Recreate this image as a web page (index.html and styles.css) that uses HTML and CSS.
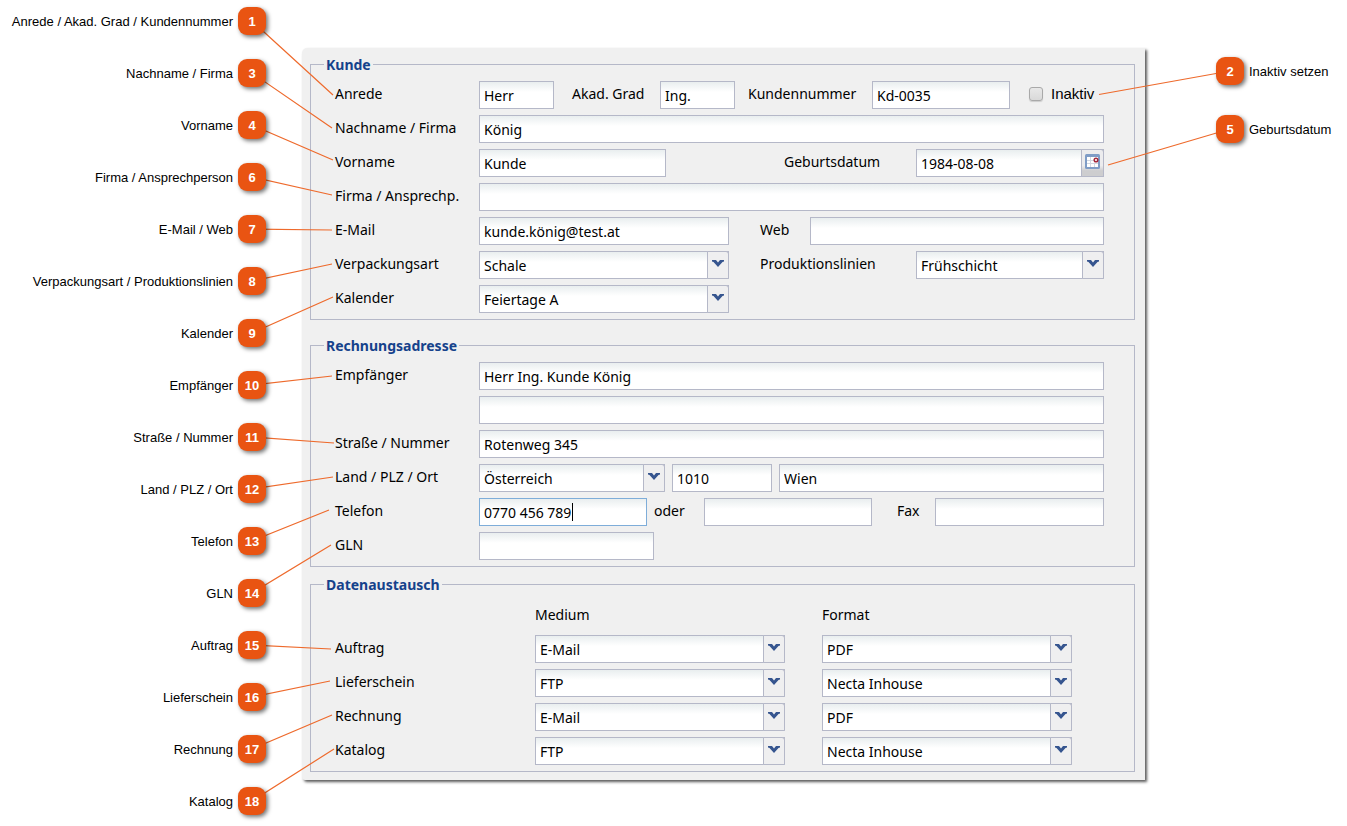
FILE: index.html
```html
<!DOCTYPE html>
<html lang="de">
<head>
<meta charset="utf-8">
<title>Kunde</title>
<link rel="stylesheet" href="styles.css">
</head>
<body>
<svg class="sprite" aria-hidden="true">
  <symbol id="chevron" viewBox="0 0 20 26">
    <path d="M4 8h4l2 2.500L12 8h4v1.500l-1.500.5-4.500 5-4.500-5L4 9.500z" fill="#36558f"/>
  </symbol>
  <symbol id="calendar" viewBox="0 0 21 26">
    <rect x="3" y="4" width="15" height="15" rx="1.500" fill="#7f9cc6"/>
    <rect x="5" y="7" width="11" height="10" fill="#fff"/>
    <path d="M8.500 7v10M12.500 13v4M5 10.500h7M5 13.500h11" stroke="#d3d8e2" fill="none"/>
    <circle cx="14" cy="10" r="1.800" fill="#fff" stroke="#a3283c" stroke-width="1.500"/>
  </symbol>
</svg>

<main class="page">
  <ol class="callouts callouts-left">
    <li><span>Anrede / Akad. Grad / Kundennummer</span><b class="badge">1</b></li>
    <li><span>Nachname / Firma</span><b class="badge">3</b></li>
    <li><span>Vorname</span><b class="badge">4</b></li>
    <li><span>Firma / Ansprechperson</span><b class="badge">6</b></li>
    <li><span>E-Mail / Web</span><b class="badge">7</b></li>
    <li><span>Verpackungsart / Produktionslinien</span><b class="badge">8</b></li>
    <li><span>Kalender</span><b class="badge">9</b></li>
    <li><span>Empfänger</span><b class="badge">10</b></li>
    <li><span>Straße / Nummer</span><b class="badge">11</b></li>
    <li><span>Land / PLZ / Ort</span><b class="badge">12</b></li>
    <li><span>Telefon</span><b class="badge">13</b></li>
    <li><span>GLN</span><b class="badge">14</b></li>
    <li><span>Auftrag</span><b class="badge">15</b></li>
    <li><span>Lieferschein</span><b class="badge">16</b></li>
    <li><span>Rechnung</span><b class="badge">17</b></li>
    <li><span>Katalog</span><b class="badge">18</b></li>
  </ol>

  <form class="panel">
    <fieldset>
      <legend>Kunde</legend>
      <div class="row row-person">
        <label for="anrede">Anrede</label>
        <input class="field" id="anrede" type="text" value="Herr">
        <label class="indent-m" for="grad">Akad. Grad</label>
        <input class="field" id="grad" type="text" value="Ing.">
        <label class="indent-s" for="nummer">Kundennummer</label>
        <input class="field" id="nummer" type="text" value="Kd-0035">
        <label class="check"><input type="checkbox">Inaktiv</label>
      </div>
      <div class="row row-full">
        <label for="nachname">Nachname / Firma</label>
        <input class="field" id="nachname" type="text" value="König">
      </div>
      <div class="row row-birth">
        <label for="vorname">Vorname</label>
        <input class="field" id="vorname" type="text" value="Kunde">
        <label class="third" for="geburt">Geburtsdatum</label>
        <div class="date">
          <input class="field" id="geburt" type="text" value="1984-08-08">
          <button class="picker" type="button" aria-label="Kalender öffnen"><svg><use href="#calendar"/></svg></button>
        </div>
      </div>
      <div class="row row-full">
        <label for="firma">Firma / Ansprechp.</label>
        <input class="field" id="firma" type="text">
      </div>
      <div class="row row-web">
        <label for="email">E-Mail</label>
        <input class="field" id="email" type="text" value="kunde.könig@test.at">
        <label class="indent-l" for="web">Web</label>
        <input class="field" id="web" type="text">
      </div>
      <div class="row row-pack">
        <label for="pack">Verpackungsart</label>
        <div class="combo"><select class="field" id="pack"><option>Schale</option></select><svg><use href="#chevron"/></svg></div>
        <label class="indent-l" for="linien">Produktionslinien</label>
        <div class="combo"><select class="field" id="linien"><option>Frühschicht</option></select><svg><use href="#chevron"/></svg></div>
      </div>
      <div class="row row-pack">
        <label for="kalender">Kalender</label>
        <div class="combo"><select class="field" id="kalender"><option>Feiertage A</option></select><svg><use href="#chevron"/></svg></div>
      </div>
    </fieldset>

    <fieldset class="spaced">
      <legend>Rechnungsadresse</legend>
      <div class="row row-full">
        <label for="empf">Empfänger</label>
        <input class="field" id="empf" type="text" value="Herr Ing. Kunde König">
      </div>
      <div class="row row-full">
        <span></span>
        <input class="field" type="text" aria-label="Empfänger Zusatz">
      </div>
      <div class="row row-full">
        <label for="strasse">Straße / Nummer</label>
        <input class="field" id="strasse" type="text" value="Rotenweg 345">
      </div>
      <div class="row row-city">
        <label for="land">Land / PLZ / Ort</label>
        <div class="combo"><select class="field" id="land"><option>Österreich</option></select><svg><use href="#chevron"/></svg></div>
        <input class="field" type="text" aria-label="PLZ" value="1010">
        <input class="field" type="text" aria-label="Ort" value="Wien">
      </div>
      <div class="row row-phone">
        <label for="tel">Telefon</label>
        <input class="field active" id="tel" type="text" value="0770 456 789">
        <label class="indent-xs" for="tel2">oder</label>
        <input class="field" id="tel2" type="text">
        <label class="indent-f" for="fax">Fax</label>
        <input class="field" id="fax" type="text">
      </div>
      <div class="row row-gln">
        <label for="gln">GLN</label>
        <input class="field" id="gln" type="text">
      </div>
    </fieldset>

    <fieldset class="close">
      <legend>Datenaustausch</legend>
      <div class="row row-data">
        <span></span><span>Medium</span><span></span><span>Format</span>
      </div>
      <div class="row row-data">
        <label for="m1">Auftrag</label>
        <div class="combo"><select class="field" id="m1"><option>E-Mail</option></select><svg><use href="#chevron"/></svg></div>
        <span></span>
        <div class="combo"><select class="field" aria-label="Auftrag Format"><option>PDF</option></select><svg><use href="#chevron"/></svg></div>
      </div>
      <div class="row row-data">
        <label for="m2">Lieferschein</label>
        <div class="combo"><select class="field" id="m2"><option>FTP</option></select><svg><use href="#chevron"/></svg></div>
        <span></span>
        <div class="combo"><select class="field" aria-label="Lieferschein Format"><option>Necta Inhouse</option></select><svg><use href="#chevron"/></svg></div>
      </div>
      <div class="row row-data">
        <label for="m3">Rechnung</label>
        <div class="combo"><select class="field" id="m3"><option>E-Mail</option></select><svg><use href="#chevron"/></svg></div>
        <span></span>
        <div class="combo"><select class="field" aria-label="Rechnung Format"><option>PDF</option></select><svg><use href="#chevron"/></svg></div>
      </div>
      <div class="row row-data">
        <label for="m4">Katalog</label>
        <div class="combo"><select class="field" id="m4"><option>FTP</option></select><svg><use href="#chevron"/></svg></div>
        <span></span>
        <div class="combo"><select class="field" aria-label="Katalog Format"><option>Necta Inhouse</option></select><svg><use href="#chevron"/></svg></div>
      </div>
    </fieldset>
  </form>

  <ol class="callouts callouts-right">
    <li><b class="badge">2</b><span>Inaktiv setzen</span></li>
    <li><b class="badge">5</b><span>Geburtsdatum</span></li>
  </ol>

  <svg class="leaders leaders-left" width="340" height="826" aria-hidden="true">
    <path d="M252 21L333 95M252 73L332 128M252 125L333 160M252 177L332 195M252 229L332 230M252 281L332 264M252 333L333 297M252 385L332 376M252 437L334 443M252 489L333 477M252 541L329 510M252 593L331 545M252 645L331 649M252 697L330 681M252 749L332 715M252 801L334 749"/>
  </svg>
  <svg class="leaders leaders-right" width="260" height="200" aria-hidden="true">
    <path d="M143 71L12 94.500M143 129L21 165"/>
  </svg>
</main>
</body>
</html>
```
FILE: styles.css
```css
* {
  box-sizing: border-box;
}

body {
  margin: 0;
  background: #fff;
  color: #000;
  font: 14px/20px "Noto Sans", "Open Sans", sans-serif;
}

.sprite {
  display: none;
}

.page {
  position: relative;
  display: grid;
  grid-template-columns: 302px minmax(780px, 1fr) 202px;
  align-items: start;
}

/* Numbered callouts */
.callouts {
  display: flex;
  flex-direction: column;
  margin: 0;
  list-style: none;
  font: 13px/16px "Liberation Sans", Arial, sans-serif;
}

.callouts li {
  display: flex;
  align-items: center;
  gap: 5px;
  white-space: nowrap;
}

.callouts span {
  padding-top: 1px;
}

.callouts-left {
  gap: 24px;
  padding: 7px 36px 11px 0;
}

.callouts-left li {
  justify-content: flex-end;
}

.callouts-right {
  gap: 30px;
  padding: 57px 0 0 71px;
}

.badge {
  z-index: 2;
  width: 28px;
  height: 28px;
  border-radius: 9px;
  background: #e95412;
  box-shadow: 2px 2px 4px rgba(0, 0, 0, 0.55);
  color: #fff;
  line-height: 29px;
  text-align: center;
}

.leaders {
  position: absolute;
  z-index: 1;
  top: 0;
  fill: none;
  stroke: #ee6a2c;
  stroke-width: 1.2;
  pointer-events: none;
}

.leaders-left {
  left: 0;
}

.leaders-right {
  right: 0;
}

/* Form */
.panel {
  margin-top: 48px;
  padding: 7px 10px 8px 8px;
  border-radius: 5px 0 0 3px;
  background: #f0f0f0;
  box-shadow: 2px 2px 3px rgba(0, 0, 0, 0.65);
}

fieldset {
  display: flex;
  flex-direction: column;
  gap: 6px;
  min-width: 0;
  margin: 0;
  padding: 7px 30px 6px 24px;
  border: 1px solid #b5b8c8;
}

.spaced {
  margin-top: 16px;
}

.close {
  margin-top: 8px;
}

legend {
  margin-left: -11px;
  padding: 0 2px;
  color: #15428b;
  font-size: 14px;
  font-weight: bold;
  line-height: 19px;
}

.row {
  display: grid;
  align-items: center;
  min-height: 28px;
  white-space: nowrap;
}

.row > label {
  padding-bottom: 2px;
}

.row-person {
  grid-template-columns: 144px 75px 106px 75px 137px minmax(60px, 1fr) 94px;
}

.row-full {
  grid-template-columns: 144px 1fr;
}

.row-birth {
  grid-template-columns: 144px 187px 1fr 132px 188px;
}

.row-web {
  grid-template-columns: 144px 250px 81px 1fr;
}

.row-pack {
  grid-template-columns: 144px 250px 1fr 188px;
}

.row-city {
  grid-template-columns: 137px 186px 100px 1fr;
  column-gap: 7px;
}

.row-phone {
  grid-template-columns: 144px 168px 57px 168px 63px 1fr;
}

.row-gln {
  grid-template-columns: 144px 175px;
}

.row-data {
  grid-template-columns: 200px 250px 37px 250px;
}

.third {
  grid-column: 4;
}

.date {
  grid-column: 5;
}

.row > .indent-xs {
  padding-left: 7px;
}

.row > .indent-s {
  padding-left: 13px;
}

.row > .indent-m {
  padding-left: 18px;
}

.row > .indent-f {
  padding-left: 25px;
}

.row > .indent-l {
  padding-left: 31px;
}

.field {
  width: 100%;
  min-width: 0;
  height: 28px;
  margin: 0;
  padding: 1px 4px 0;
  border: 1px solid #b5b8c8;
  border-radius: 0;
  outline: 0;
  appearance: none;
  background: #fff linear-gradient(#e9eeef, #fff 10px) no-repeat;
  color: #000;
  font: inherit;
}

.active {
  border-color: #7eadd9;
  background:
    linear-gradient(#000, #000) 92px 4px / 1px 18px no-repeat,
    #fff linear-gradient(#e9eeef, #fff 10px) no-repeat;
}

.combo,
.date {
  display: grid;
  grid-template-columns: 1fr 22px;
}

.date {
  grid-template-columns: 1fr 23px;
}

.combo > .field,
.date > .field {
  grid-area: 1 / 1 / 2 / 3;
}

.combo > svg,
.picker {
  z-index: 1;
  grid-area: 1 / 2;
  width: 100%;
  height: 28px;
  border: 1px solid #b5b8c8;
  border-top-right-radius: 3px;
  background: #efeff0;
  pointer-events: none;
}

.picker {
  padding: 0;
  background: linear-gradient(#ececee 60%, #cdcdcf 80%);
  pointer-events: auto;
}

.picker svg {
  display: block;
  width: 21px;
  height: 26px;
}

.check {
  display: flex;
  align-items: center;
  gap: 8px;
  padding-left: 19px;
  font: 15px/20px "Liberation Sans", Arial, sans-serif;
}

.check input {
  width: 14px;
  height: 14px;
  margin: 0;
  border: 1px solid #a9a9a9;
  border-radius: 3px;
  appearance: none;
  background: linear-gradient(#e8e8e8, #d9d9d9);
  box-shadow: 0 1px 1px rgba(0, 0, 0, 0.15);
}
```
